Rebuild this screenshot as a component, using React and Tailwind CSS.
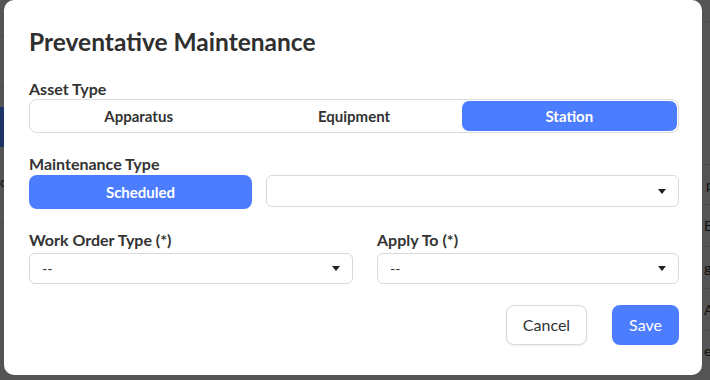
import React from 'react';

const Caret = () => (
    <svg width="8" height="5" viewBox="0 0 8 5" className="shrink-0">
        <path d="M0 0 L8 0 L4 5 Z" fill="#222" />
    </svg>
);

const Select = ({ value, className = '' }) => (
    <div className={`flex items-center justify-between border border-[#d9d9d9] rounded-[6px] bg-white pl-3 pr-3 ${className}`}>
        <span className="text-[14px] text-[#333]">{value}</span>
        <Caret />
    </div>
);

const Backdrop = () => (
    <div className="absolute inset-0 bg-[#545454] flex justify-between">
        <div className="w-[4px] flex flex-col">
            <div className="h-[37px] border-b border-[#4a4a4a]" />
            <div className="h-[50px] border-b border-[#4a4a4a]" />
            <div className="h-[20px]" />
            <div className="h-[40px] bg-[#1d3468]" />
            <div className="h-[76px] border-b border-[#4a4a4a] text-[14px] text-[#111] leading-[70px] overflow-hidden">c</div>
        </div>
        <div className="w-[8px] flex flex-col text-[14px] text-[#111] overflow-hidden">
            <div className="h-[22px] border-b border-[#4a4a4a]" />
            <div className="h-[143px] border-b border-[#4a4a4a]" />
            <div className="h-[40px] pl-[4px] leading-[40px] border-b border-[#4a4a4a]">p</div>
            <div className="h-[42px] pl-[2px] leading-[42px] border-b border-[#4a4a4a]">Ec</div>
            <div className="h-[42px] pl-[2px] leading-[42px] border-b border-[#4a4a4a]">g</div>
            <div className="h-[42px] pl-[2px] leading-[42px] border-b border-[#4a4a4a]">Ap</div>
            <div className="h-[40px] pl-[2px] leading-[40px]">e</div>
        </div>
    </div>
);

export default function App() {
    const font = { fontFamily: 'Lato, "Open Sans", sans-serif' };
    return (
        <div className="relative w-[710px] h-[380px] overflow-hidden" style={font}>
            <Backdrop />
            <div className="absolute left-[4px] top-0 w-[698px] h-[375px] bg-white rounded-[10px] pl-[25px] pr-[23px] pt-[27px] text-[#333]">
                <h1 className="text-[24.5px] font-bold leading-[30px] text-[#2f2f2f]">Preventative Maintenance</h1>

                <div className="mt-[22px] text-[16px] font-bold leading-[20px]">Asset Type</div>
                <div className="flex h-[34px] border border-[#dcdcdc] rounded-[8px] p-[1px]">
                    <div className="flex-1 flex items-center justify-center text-[15px] font-bold">Apparatus</div>
                    <div className="flex-1 flex items-center justify-center text-[15px] font-bold">Equipment</div>
                    <div className="flex-1 flex items-center justify-center text-[15px] font-bold text-white bg-[#4d7dff] rounded-[7px]">Station</div>
                </div>

                <div className="mt-[21px] text-[16px] font-bold leading-[20px]">Maintenance Type</div>
                <div className="mt-[1px] flex items-start gap-[14px]">
                    <div className="w-[223px] h-[34px] flex items-center justify-center bg-[#4d7dff] rounded-[8px] text-white text-[15px] font-bold">Scheduled</div>
                    <Select value="" className="flex-1 h-[32px]" />
                </div>

                <div className="mt-[21px] flex gap-[24px]">
                    <div className="w-[324px]">
                        <div className="text-[16px] font-bold leading-[20px]">Work Order Type (*)</div>
                        <Select value="--" className="mt-[3px] h-[31px]" />
                    </div>
                    <div className="flex-1">
                        <div className="text-[16px] font-bold leading-[20px]">Apply To (*)</div>
                        <Select value="--" className="mt-[3px] h-[31px]" />
                    </div>
                </div>

                <div className="mt-[21px] flex justify-end gap-[25px]">
                    <button className="w-[81px] h-[40px] border border-[#d9d9d9] rounded-[8px] bg-white text-[16px] text-[#333] shadow-[0_1px_2px_rgba(0,0,0,0.08)]">Cancel</button>
                    <button className="w-[67px] h-[40px] rounded-[8px] bg-[#4d7dff] text-[16px] text-white">Save</button>
                </div>
            </div>
        </div>
    );
}
